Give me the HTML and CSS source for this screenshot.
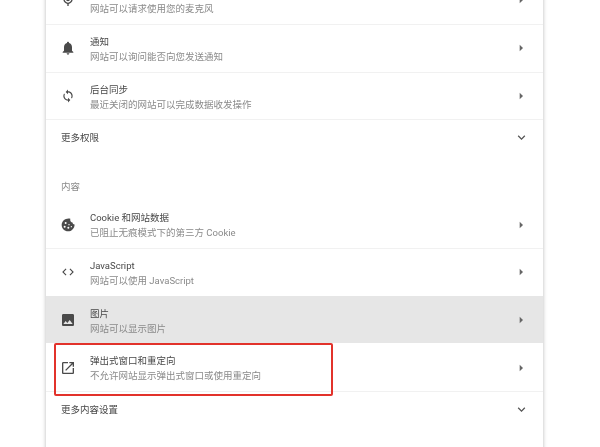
FILE: index.html
```html
<!DOCTYPE html>
<html lang="zh-CN">
<head>
<meta charset="utf-8">
<title>网站设置</title>
<link rel="stylesheet" href="styles.css">
</head>
<body>
<main class="card">
  <div class="row first">
    <svg class="icon" viewBox="0 0 24 24"><path d="M12 14c1.66 0 3-1.34 3-3V5c0-1.66-1.34-3-3-3S9 3.34 9 5v6c0 1.66 1.34 3 3 3z"/><path d="M17 11c0 2.76-2.24 5-5 5s-5-2.24-5-5H5c0 3.53 2.61 6.43 6 6.92V21h2v-3.08c3.39-.49 6-3.39 6-6.92h-2z"/></svg>
    <div class="text"><div class="title">麦克风</div><div class="sub">网站可以请求使用您的麦克风</div></div>
    <svg class="arrow" viewBox="0 0 24 24"><path d="M10 7l5 5-5 5z"/></svg>
  </div>
  <div class="row">
    <svg class="icon" viewBox="0 0 24 24"><path d="M12 22c1.1 0 2-.9 2-2h-4c0 1.1.89 2 2 2zm6-6v-5c0-3.07-1.64-5.64-4.5-6.32V4c0-.83-.67-1.5-1.5-1.5s-1.5.67-1.5 1.5v.68C7.63 5.36 6 7.92 6 11v5l-2 2v1h16v-1l-2-2z"/></svg>
    <div class="text"><div class="title">通知</div><div class="sub">网站可以询问能否向您发送通知</div></div>
    <svg class="arrow" viewBox="0 0 24 24"><path d="M10 7l5 5-5 5z"/></svg>
  </div>
  <div class="row">
    <svg class="icon small" viewBox="0 0 24 24"><path d="M12 4V1L8 5l4 4V6c3.31 0 6 2.69 6 6 0 1.01-.25 1.97-.7 2.8l1.46 1.46C19.54 15.03 20 13.57 20 12c0-4.42-3.58-8-8-8zm0 14c-3.31 0-6-2.69-6-6 0-1.01.25-1.97.7-2.8L5.24 7.74C4.46 8.97 4 10.43 4 12c0 4.42 3.58 8 8 8v3l4-4-4-4v3z"/></svg>
    <div class="text"><div class="title">后台同步</div><div class="sub">最近关闭的网站可以完成数据收发操作</div></div>
    <svg class="arrow" viewBox="0 0 24 24"><path d="M10 7l5 5-5 5z"/></svg>
  </div>
  <div class="expand">
    <span class="expand-label">更多权限</span>
    <svg class="chevron" viewBox="0 0 24 24"><path d="M7.41 8.59L12 13.17l4.59-4.58L18 10l-6 6-6-6z"/></svg>
  </div>
  <div class="section">内容</div>
  <div class="row no-line">
    <svg class="icon" viewBox="0 0 24 24"><path fill-rule="evenodd" d="M21.9 11.1c-1.9-.1-3-1.3-3.1-3-1.8.1-3.3-1.3-3.4-3.2-.1-.8-.1-1.5.1-2.3C9.3.9 2.5 5.4 2.500 12c0 5.3 4.3 9.500 9.500 9.500 5.600 0 10-4.800 9.900-10.400zM8.500 10.500a1.500 1.500 0 1 1 0-3 1.500 1.500 0 0 1 0 3zM7 16a1.500 1.500 0 1 1 0-3 1.500 1.500 0 0 1 0 3zm5.500 1.500a1.500 1.500 0 1 1 0-3 1.500 1.500 0 0 1 0 3zm1-5a1 1 0 1 1 0-2 1 1 0 0 1 0 2zm3.500 3a1 1 0 1 1 0-2 1 1 0 0 1 0 2z"/></svg>
    <div class="text"><div class="title">Cookie 和网站数据</div><div class="sub">已阻止无痕模式下的第三方 Cookie</div></div>
    <svg class="arrow" viewBox="0 0 24 24"><path d="M10 7l5 5-5 5z"/></svg>
  </div>
  <div class="row">
    <svg class="icon small" viewBox="0 0 24 24"><path d="M9.400 16.600L4.800 12l4.600-4.600L8 6l-6 6 6 6 1.400-1.400zm5.200 0l4.600-4.600-4.600-4.600L16 6l6 6-6 6-1.400-1.400z"/></svg>
    <div class="text"><div class="title">JavaScript</div><div class="sub">网站可以使用 JavaScript</div></div>
    <svg class="arrow" viewBox="0 0 24 24"><path d="M10 7l5 5-5 5z"/></svg>
  </div>
  <div class="row active">
    <svg class="icon" viewBox="0 0 24 24"><path d="M21 19V5c0-1.100-.9-2-2-2H5c-1.100 0-2 .9-2 2v14c0 1.100.9 2 2 2h14c1.100 0 2-.9 2-2zM8.500 13.500l2.500 3.010L14.500 12l4.500 6H5l3.500-4.500z"/></svg>
    <div class="text"><div class="title">图片</div><div class="sub">网站可以显示图片</div></div>
    <svg class="arrow" viewBox="0 0 24 24"><path d="M10 7l5 5-5 5z"/></svg>
  </div>
  <div class="row highlighted">
    <svg class="icon" viewBox="0 0 24 24"><path d="M19 19H5V5h7V3H5c-1.110 0-2 .9-2 2v14c0 1.100.89 2 2 2h14c1.100 0 2-.9 2-2v-7h-2v7zM14 3v2h3.590l-9.830 9.830 1.410 1.410L19 6.410V10h2V3h-7z"/></svg>
    <div class="text"><div class="title">弹出式窗口和重定向</div><div class="sub">不允许网站显示弹出式窗口或使用重定向</div></div>
    <svg class="arrow" viewBox="0 0 24 24"><path d="M10 7l5 5-5 5z"/></svg>
    <div class="callout"></div>
  </div>
  <div class="expand">
    <span class="expand-label">更多内容设置</span>
    <svg class="chevron" viewBox="0 0 24 24"><path d="M7.41 8.59L12 13.17l4.59-4.58L18 10l-6 6-6-6z"/></svg>
  </div>
</main>
</body>
</html>
```
FILE: styles.css
```css
html, body {
  margin: 0;
  height: 447px;
  overflow: hidden;
  background: #fff;
}
body {
  font-family: Roboto, "Noto Sans CJK SC", sans-serif;
  font-size: 9.5px;
  color: #333;
}
.card {
  width: 497px;
  min-height: 480px;
  margin: -23.6px 0 0 46px;
  background: #fff;
  box-shadow: 0 0 4px rgba(0, 0, 0, 0.28);
  filter: blur(0.3px);
}
.row {
  position: relative;
  display: flex;
  align-items: center;
  box-sizing: border-box;
  height: 47.65px;
  padding: 0 14px;
  border-top: 1px solid #f1f1f1;
}
.row.first { border-top: 0; }
.row.no-line { border-top-color: transparent; }
.row.active {
  background: #e6e6e6;
  border-top-color: #e6e6e6;
}
.row.active + .row { border-top-color: #fff; }
.icon {
  flex: none;
  width: 16px;
  height: 16px;
  fill: #4a4a4a;
}
.icon.small {
  width: 14px;
  height: 14px;
  margin: 0 1px;
}
.text {
  flex: 1;
  margin-left: 14px;
  padding-top: 1.5px;
  line-height: 15px;
}
.title { color: #484848; }
.sub { color: #8a8a8a; }
.arrow {
  flex: none;
  width: 16px;
  height: 16px;
  fill: #666;
}
.expand {
  display: flex;
  align-items: center;
  justify-content: space-between;
  box-sizing: border-box;
  height: 36px;
  padding: 0 14.5px 0 15px;
  border-top: 1px solid #f1f1f1;
}
.expand-label {
  color: #484848;
  margin-top: -1px;
}
.chevron {
  flex: none;
  width: 15px;
  height: 15px;
  fill: #555;
}
.section {
  box-sizing: border-box;
  height: 45px;
  padding: 24.5px 15px 0;
  line-height: 14px;
  color: #8a8a8a;
}
.callout {
  position: absolute;
  left: 8px;
  top: -1px;
  width: 279px;
  height: 53px;
  box-sizing: border-box;
  border: 2px solid #e2322b;
  border-radius: 2px;
}
```
